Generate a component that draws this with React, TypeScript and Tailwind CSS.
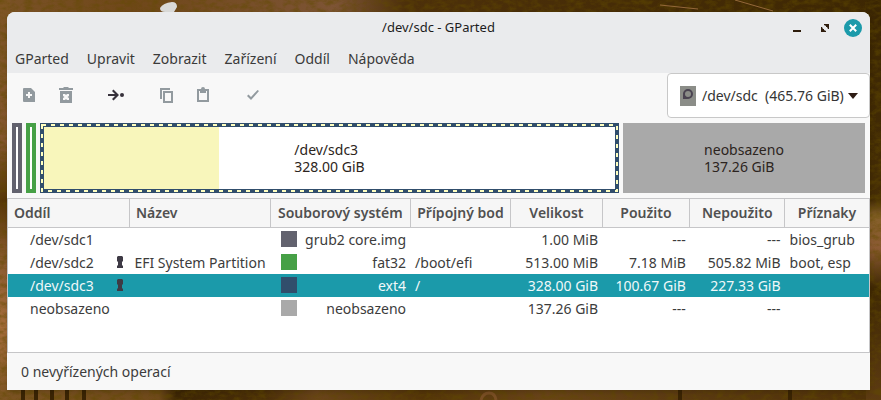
import type { ReactNode } from "react";

interface Partition {
  name: string;
  mounted: boolean;
  label: string;
  fs: string;
  swatch: string;
  mount: string;
  size: string;
  used: string;
  unused: string;
  flags: string;
  selected?: boolean;
}

const MENU = ["GParted", "Upravit", "Zobrazit", "Zařízení", "Oddíl", "Nápověda"];

const COLUMNS = [
  { title: "Oddíl", cell: "w-[14.1%] pl-1.5 text-left" },
  { title: "Název", cell: "w-[16.4%] pl-1.5 text-left" },
  { title: "Souborový systém", cell: "w-[16.2%] text-center" },
  { title: "Přípojný bod", cell: "w-[11.7%] text-center" },
  { title: "Velikost", cell: "w-[10.6%] text-center" },
  { title: "Použito", cell: "w-[10.2%] text-center" },
  { title: "Nepoužito", cell: "w-[11%] text-center" },
  { title: "Příznaky", cell: "text-center" },
];

const PARTITIONS: Partition[] = [
  { name: "/dev/sdc1", mounted: false, label: "", fs: "grub2 core.img", swatch: "bg-[#62626e]", mount: "", size: "1.00 MiB", used: "---", unused: "---", flags: "bios_grub" },
  { name: "/dev/sdc2", mounted: true, label: "EFI System Partition", fs: "fat32", swatch: "bg-[#46a046]", mount: "/boot/efi", size: "513.00 MiB", used: "7.18 MiB", unused: "505.82 MiB", flags: "boot, esp" },
  { name: "/dev/sdc3", mounted: true, label: "", fs: "ext4", swatch: "bg-[#314e6c]", mount: "/", size: "328.00 GiB", used: "100.67 GiB", unused: "227.33 GiB", flags: "", selected: true },
  { name: "neobsazeno", mounted: false, label: "", fs: "neobsazeno", swatch: "bg-[#a9a9a9]", mount: "", size: "137.26 GiB", used: "---", unused: "---", flags: "" },
];

function Wallpaper() {
  return (
    <svg className="absolute inset-0 h-full w-full" viewBox="0 0 881 400" preserveAspectRatio="none" aria-hidden="true">
      <defs>
        <linearGradient id="top">
          <stop offset="0" stopColor="#7a5227" />
          <stop offset="0.15" stopColor="#6f4719" />
          <stop offset="0.38" stopColor="#7d5435" />
          <stop offset="0.46" stopColor="#4d300a" />
          <stop offset="1" stopColor="#3d2703" />
        </linearGradient>
        <linearGradient id="left" x2="0" y2="1">
          <stop offset="0" stopColor="#7c5423" />
          <stop offset="0.35" stopColor="#85572f" />
          <stop offset="0.5" stopColor="#573707" />
          <stop offset="0.65" stopColor="#8c5c31" />
          <stop offset="0.82" stopColor="#a56d3c" />
          <stop offset="1" stopColor="#7c5423" />
        </linearGradient>
        <linearGradient id="right" x2="0" y2="1">
          <stop offset="0" stopColor="#3a2503" />
          <stop offset="0.5" stopColor="#442c05" />
          <stop offset="0.54" stopColor="#85602a" />
          <stop offset="0.62" stopColor="#8b5a33" />
          <stop offset="0.72" stopColor="#3f2803" />
          <stop offset="1" stopColor="#5d3b12" />
        </linearGradient>
        <linearGradient id="bottom">
          <stop offset="0" stopColor="#7c5423" />
          <stop offset="0.18" stopColor="#704a1b" />
          <stop offset="0.2" stopColor="#3d2605" />
          <stop offset="0.3" stopColor="#4b2f09" />
          <stop offset="0.36" stopColor="#6b451b" />
          <stop offset="0.48" stopColor="#543509" />
          <stop offset="0.62" stopColor="#6a441a" />
          <stop offset="0.78" stopColor="#5b3a12" />
          <stop offset="1" stopColor="#503209" />
        </linearGradient>
        <filter id="grain" x="0" y="0" width="100%" height="100%">
          <feTurbulence type="fractalNoise" baseFrequency="0.12 0.2" numOctaves="4" seed="4" />
          <feColorMatrix values="0 0 0 0 0.12  0 0 0 0 0.07  0 0 0 0 0  2.5 0 0 0 -0.95" />
        </filter>
      </defs>
      <rect width="881" height="200" fill="url(#top)" />
      <rect y="200" width="881" height="200" fill="url(#bottom)" />
      <rect width="10" height="400" fill="url(#left)" />
      <rect x="866" width="15" height="400" fill="url(#right)" />
      <rect width="881" height="400" filter="url(#grain)" opacity="0.5" />
      <path d="M160 8q3-5 12-6 5 0 5 5l-3 5h-9q-5 0-5-4z" fill="#d9d9d7" />
      <path d="M660 5l38 4M735 0l38 11" stroke="#94683a" fill="none" />
      <path d="M23 390v10M36 390v10M52 390v10M67 390v10M84 390v10M680 390v10M790 390v10" stroke="#3a2404" strokeWidth="4" />
      <path d="M481 400q2-7 8-7t7 7" stroke="#7a4f24" strokeWidth="3" fill="none" />
    </svg>
  );
}

function ToolButton({ label, className, children }: { label: string; className: string; children: ReactNode }) {
  return (
    <button aria-label={label} className={`flex size-6 items-center justify-center ${className}`}>
      <svg width="16" height="16" viewBox="0 0 16 16" fill="currentColor" className="overflow-visible" aria-hidden="true">
        {children}
      </svg>
    </button>
  );
}

function Keyhole() {
  return (
    <svg width="8" height="12" viewBox="0 0 8 12" fill="#3e3a45" className="shrink-0" aria-hidden="true">
      <path d="M2 0h4l1 1v4L6 6v3l1 1v2H1v-2l1-1V6L1 5V1z" />
    </svg>
  );
}

function TitleBar() {
  return (
    <div className="relative flex h-8 items-center justify-center">
      <h1 className="text-[13px] text-[#1c1c1c]">/dev/sdc - GParted</h1>
      <div className="absolute right-2 flex items-center gap-2.5">
        <button aria-label="Minimalizovat" className="flex size-[18px] items-center justify-center text-[#2e1c0c]">
          <svg width="10" height="10" viewBox="0 0 10 10" fill="currentColor" aria-hidden="true">
            <path d="M1 7h8v2H1z" />
          </svg>
        </button>
        <button aria-label="Maximalizovat" className="flex size-[18px] items-center justify-center text-[#2e1c0c]">
          <svg width="10" height="10" viewBox="0 0 10 10" fill="currentColor" aria-hidden="true">
            <path d="M4 1h5v5H8L7 4H6V3L4 2zM1 4h1l1 2h1v1l2 1v1H1z" />
          </svg>
        </button>
        <button aria-label="Zavřít" className="flex size-[18px] items-center justify-center rounded-full bg-[#1b9aaa] text-white">
          <svg width="8" height="8" viewBox="0 0 8 8" stroke="currentColor" strokeWidth="2" aria-hidden="true">
            <path d="M.8.8l6.400 6.400M7.200.8L.8 7.200" />
          </svg>
        </button>
      </div>
    </div>
  );
}

function Toolbar() {
  return (
    <div className="flex h-[45px] items-center pl-2.5 text-[#929a9f]">
      <ToolButton label="Nový" className="">
        <path fillRule="evenodd" d="M3 0h7l4 4v10H3a1 1 0 0 1-1-1V1a1 1 0 0 1 1-1zm4 4v2H5v2h2v2h2V8h2V6H9V4z" />
      </ToolButton>
      <ToolButton label="Smazat" className="ml-[13px]">
        <path d="M1 0h4l1-1h4l1 1h4v2H1z" />
        <path fillRule="evenodd" d="M2 3h12v12H2zm3 3v2l1.500 1L5 10v2h2l1-1 1 1h2v-2l-1.500-1L11 8V6H9L8 7 7 6z" />
      </ToolButton>
      <ToolButton label="Změnit velikost" className="ml-[26px] text-[#37323c]">
        <path d="M0 6h7L4 3l1.500-1.500L11 7l-5.500 5.500L4 11l3-3H0z" />
        <circle cx="14" cy="7" r="2" />
      </ToolButton>
      <ToolButton label="Kopírovat" className="ml-[26px]">
        <path d="M2 0h10v2H4v9H2z" />
        <path fillRule="evenodd" d="M5 3h10v12H5zm2 2v8h6V5z" />
      </ToolButton>
      <ToolButton label="Vložit" className="ml-[13px]">
        <path fillRule="evenodd" d="M2 1h4a2 2 0 0 1 4 0h4v13H2zm2 2v9h8V3h-1v2H5V3z" />
      </ToolButton>
      <ToolButton label="Použít" className="ml-[26px]">
        <path d="M2 8l1.500-1.500L6 9l6.500-7L14 3 6 12z" />
      </ToolButton>
      <label className="relative ml-auto flex h-[45px] w-[203px] items-center rounded-sm border border-[#c8c8c8] bg-white pl-3">
        <svg width="16" height="20" viewBox="0 0 16 20" className="shrink-0" aria-hidden="true">
          <path d="M0 0h16v20H0z" fill="#8b8d88" />
          <circle cx="8" cy="8" r="4" fill="none" stroke="#4a4351" strokeWidth="2" />
          <path d="M3 13V8l5 5z" fill="#4a4351" />
        </svg>
        <select aria-label="Zařízení" className="min-w-0 flex-1 appearance-none bg-transparent pl-1.5 text-sm text-[#353535] outline-none">
          <option>/dev/sdc&nbsp; (465.76 GiB)</option>
        </select>
        <svg width="10" height="6" viewBox="0 0 10 6" className="pointer-events-none absolute right-[11px]" aria-hidden="true">
          <path d="M0 0h10L5 6z" fill="#2e1c14" />
        </svg>
      </label>
    </div>
  );
}

function DiskMap() {
  return (
    <div className="flex h-[70px] gap-1 px-[5px] text-sm leading-[17px] text-[#2c2420]">
      <div className="w-2.5 border-4 border-[#62626e] bg-white" />
      <div className="w-2.5 border-4 border-[#46a046] bg-white" />
      <div className="relative flex flex-[579] items-center justify-center bg-[#314e6c]">
        <div className="absolute inset-1 flex bg-white">
          <div className="w-[30.7%] bg-[#f8f6bb]" />
        </div>
        <svg className="absolute inset-0 h-full w-full" aria-hidden="true">
          <rect x="2" y="2" fill="none" stroke="#ffffc0" strokeWidth="2" strokeDasharray="4 5" className="h-[calc(100%-4px)] w-[calc(100%-4px)]" />
        </svg>
        <div className="relative">
          <p>/dev/sdc3</p>
          <p>328.00 GiB</p>
        </div>
      </div>
      <div className="flex flex-[242] items-center justify-center bg-[#a9a9a9]">
        <div>
          <p>neobsazeno</p>
          <p>137.26 GiB</p>
        </div>
      </div>
    </div>
  );
}

function PartitionTable() {
  return (
    <div className="mt-[5px] h-[155px] border border-[#c6c6c8] bg-white">
      <table className="w-full table-fixed border-collapse text-sm whitespace-nowrap text-[#3c3c3c]">
        <thead>
          <tr className="h-7 border-b border-[#c6c6c8] bg-[#f6f6f6]">
            {COLUMNS.map((c) => (
              <th key={c.title} className={`border-r border-[#c6c6c8] p-0 font-semibold text-[#505050] last:border-r-0 ${c.cell}`}>
                {c.title}
              </th>
            ))}
          </tr>
        </thead>
        <tbody className="leading-[23px]">
          {PARTITIONS.map((p) => (
            <tr key={p.name} className={`h-[23px] ${p.selected ? "bg-[#1b9aaa] text-[#f0f8f9]" : ""}`}>
              <td className="p-0 pr-[5px] pl-[22px]">
                <div className="flex items-center justify-between">
                  {p.name}
                  {p.mounted && <Keyhole />}
                </div>
              </td>
              <td className="p-0 pl-[5px]">{p.label}</td>
              <td className="p-0 pr-1 pl-2.5">
                <div className="flex items-center justify-between">
                  <span className={`size-4 ${p.swatch}`} />
                  {p.fs}
                </div>
              </td>
              <td className="p-0 pl-[5px]">{p.mount}</td>
              <td className="p-0 pr-1 text-right">{p.size}</td>
              <td className="p-0 pr-1 text-right">{p.used}</td>
              <td className="p-0 pr-1 text-right">{p.unused}</td>
              <td className="p-0 pl-[5px]">{p.flags}</td>
            </tr>
          ))}
        </tbody>
      </table>
    </div>
  );
}

export default function App() {
  return (
    <div className="relative min-h-screen overflow-hidden pt-3 pr-[11px] pb-2.5 pl-[7px] font-['Noto_Sans','Open_Sans',sans-serif]">
      <Wallpaper />
      <main className="relative overflow-hidden rounded-t-lg bg-[#f8f8f8] shadow-md">
        <header className="bg-[#eaebed]">
          <TitleBar />
          <nav className="flex h-[29px] items-center gap-[18px] pl-2 text-sm text-[#3a3a3a]">
            {MENU.map((m) => (
              <button key={m}>{m}</button>
            ))}
          </nav>
        </header>
        <Toolbar />
        <div className="pt-[5px]">
          <DiskMap />
        </div>
        <PartitionTable />
        <footer className="flex h-[37px] items-center pl-3.5 text-sm text-[#3c3c3c]">0 nevyřízených operací</footer>
      </main>
    </div>
  );
}
